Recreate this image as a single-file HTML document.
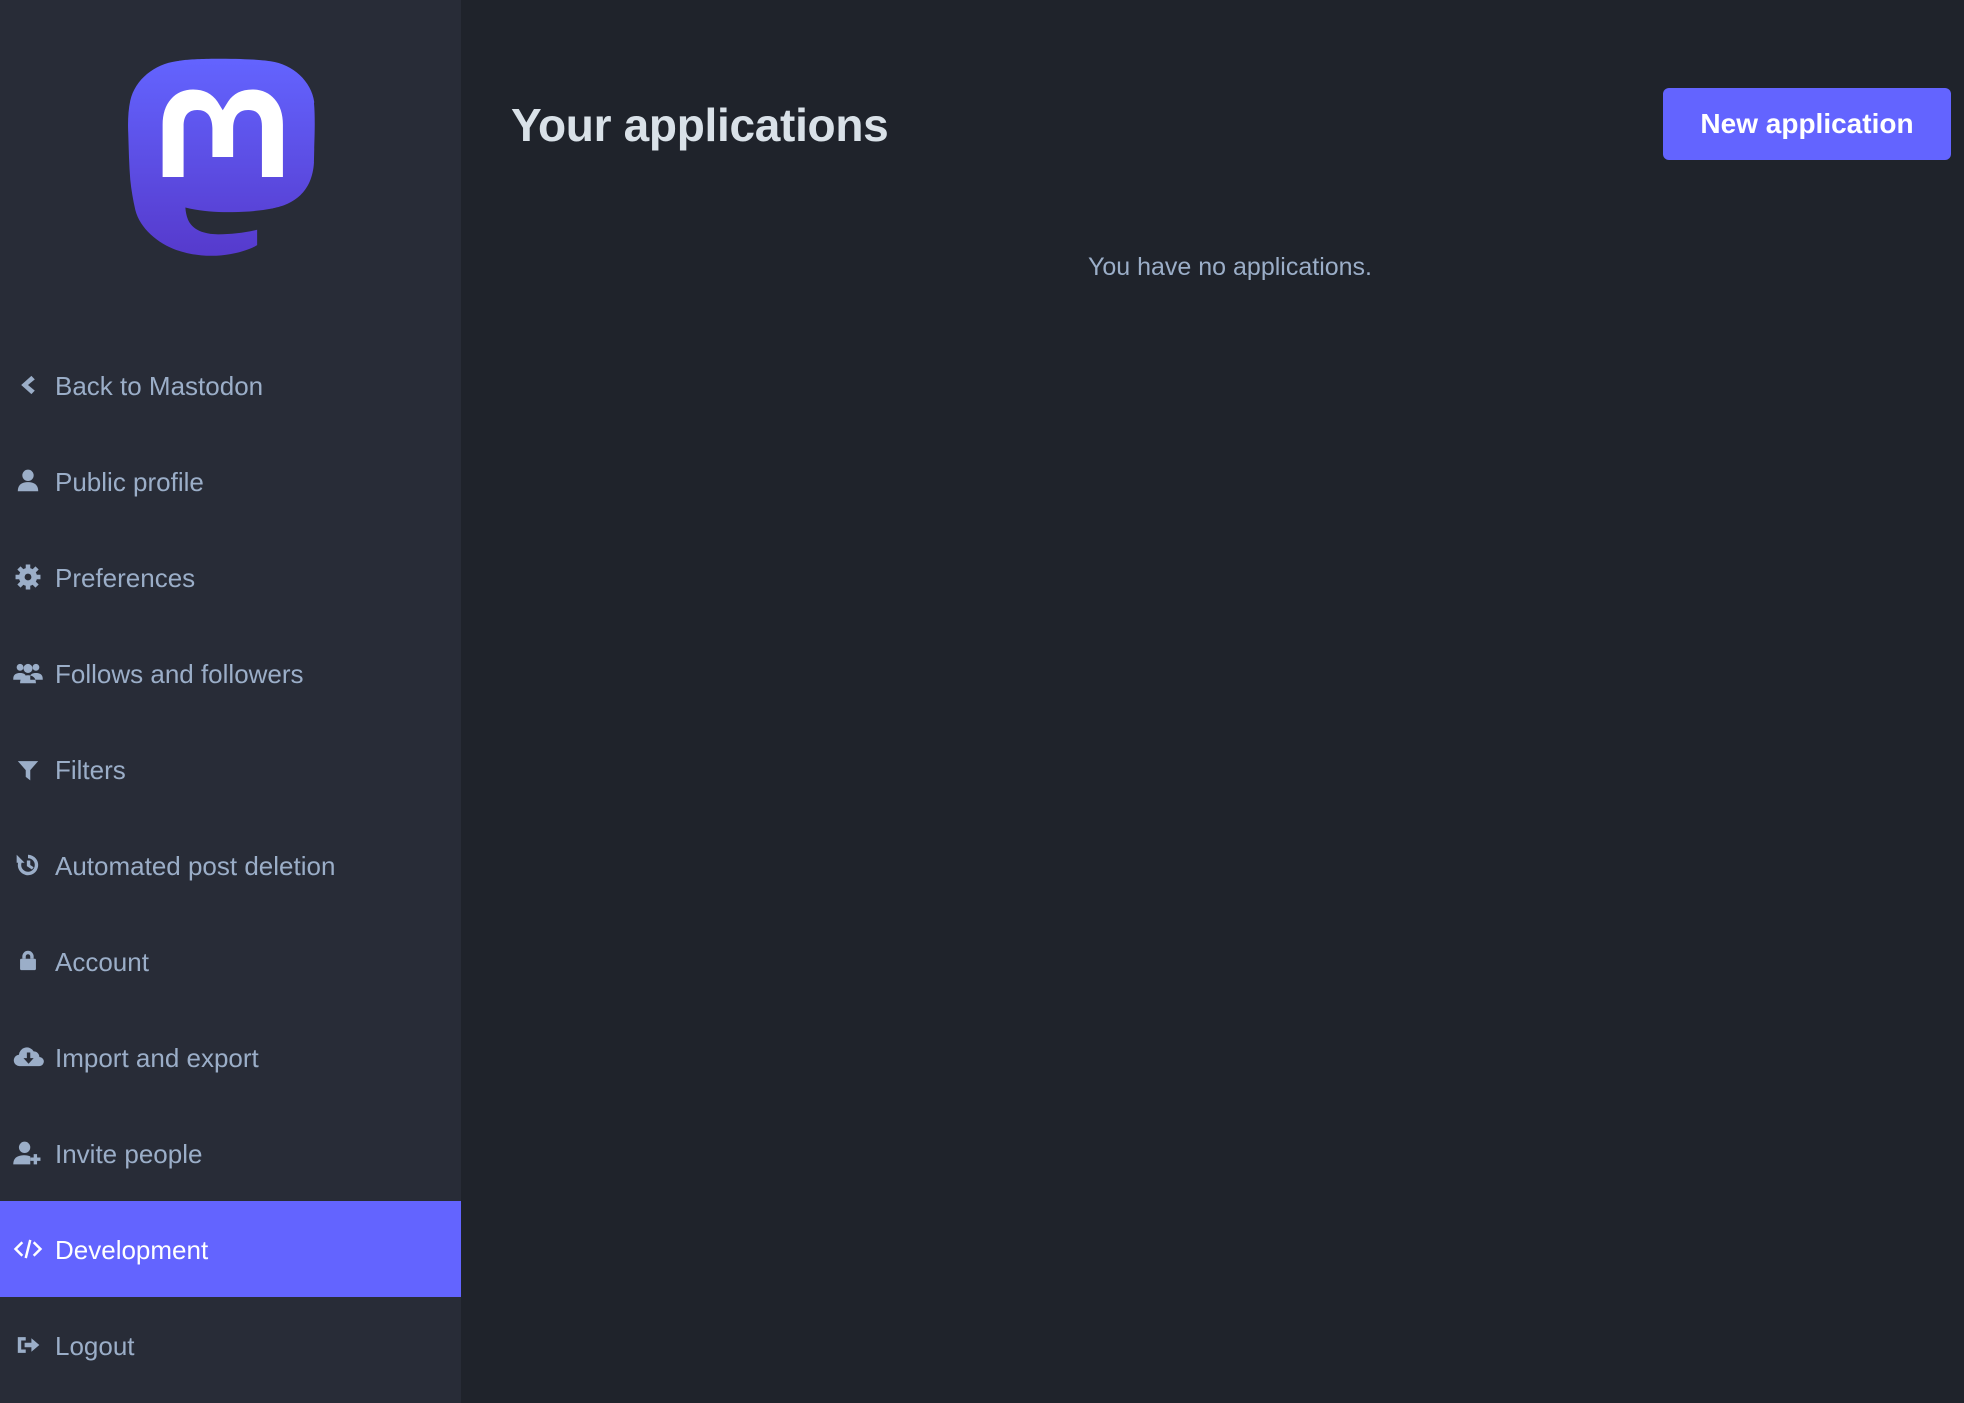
<!DOCTYPE html>
<html><head><meta charset="utf-8"><style>
*{margin:0;padding:0;box-sizing:border-box}
html,body{width:1964px;height:1403px;overflow:hidden;background:#1f232b;font-family:"Liberation Sans",sans-serif}
.side{position:absolute;left:0;top:0;width:461px;height:1403px;background:#282c37}
.logo{position:absolute;left:128px;top:58px;width:187px;height:200px}
.item{position:absolute;left:0;width:461px;height:96px;color:#9baec8;font-size:26px}
.item svg{position:absolute;left:11px;top:50%;transform:translateY(-50%);width:34px;height:34px;fill:#9baec8}
.item span{position:absolute;left:55px;top:34px;line-height:30px}
.item.act{background:#6364ff;color:#fff}
.item.act svg{fill:none;stroke:#fff}
h1{position:absolute;left:511px;top:98px;font-size:46px;font-weight:bold;color:#d9e1e8;letter-spacing:-0.3px}
.btn{position:absolute;left:1663px;top:88px;width:288px;height:72px;background:#6364ff;border-radius:6px;color:#fff;font-size:28px;font-weight:bold;display:flex;align-items:center;justify-content:center}
.empty{position:absolute;left:1030px;top:253px;width:400px;text-align:center;color:#9baec8;font-size:25px;white-space:nowrap}
</style></head><body>
<div class="side">
<svg class="logo" viewBox="0 0 74 79"><defs><linearGradient id="g" x1="0" y1="0" x2="0" y2="1"><stop offset="0" stop-color="#6364ff"/><stop offset="1" stop-color="#563acc"/></linearGradient></defs>
<path fill="url(#g)" d="M73.7 17.4C72.6 9.1 65.2 2.4 56.4 1.2 54.9 1 49.4.2 36.4.2h-.1C23.3.2 20.5 1 19.1 1.2 10.6 2.4 2.8 8.3.9 16.8 0 21 -.1 25.6.1 29.9c.2 6.1.3 12.2.8 18.2.4 4 1.1 8 2 12 1.8 7.3 9.1 13.3 16.2 15.8 7.6 2.6 15.8 3 23.6 1.2.9-.2 1.7-.4 2.6-.7 1.9-.6 4.1-1.3 5.8-2.4V67.9c-5 1.2-10.2 1.8-15.4 1.8-8.9 0-11.3-4.2-12-5.9-.6-1.5-.9-3.1-1-4.7 4.9 1.2 10 1.8 15.1 1.8 1.2 0 2.4 0 3.7 0 5.1-.1 10.5-.4 15.5-1.4.1 0 .3 0 .4-.1 7.9-1.5 15.5-6.2 16.2-18.2 0-.5.1-4.9.1-5.4 0-1.7.5-11.8-.1-18z"/>
<path fill="#fff" d="M61.3 47H53V26.9c0-4.2-1.8-6.4-5.4-6.4-4 0-6 2.6-6 7.6v11H33.4v-11c0-5-2-7.6-6-7.6-3.6 0-5.4 2.2-5.4 6.4V47H13.7V26.3c0-4.2 1.1-7.6 3.3-10.1 2.2-2.5 5.2-3.8 8.8-3.8 4.2 0 7.4 1.6 9.6 4.8l2.1 3.4 2.1-3.4c2.1-3.2 5.3-4.8 9.6-4.8 3.7 0 6.6 1.3 8.8 3.8 2.2 2.5 3.3 5.900 3.3 10.1z"/>
</svg>
<div class="item" style="top:337px"><svg viewBox="0 0 30 30"><path d="M18 7l3 3-6 5 6 5-3 3-9-8z"/></svg><span>Back to Mastodon</span></div>
<div class="item" style="top:433px"><svg viewBox="0 0 30 30"><circle cx="15" cy="10" r="5"/><path d="M6 24c0-6 4-8 9-8s9 2 9 8z"/></svg><span>Public profile</span></div>
<div class="item" style="top:529px"><svg viewBox="0 0 30 30"><circle cx="15" cy="15" r="8"/><g stroke="#9baec8" stroke-width="4"><path d="M15 4v22M4 15h22M7 7l16 16M23 7L7 23"/></g><circle cx="15" cy="15" r="3" fill="#282c37"/></svg><span>Preferences</span></div>
<div class="item" style="top:625px"><svg viewBox="0 0 30 30"><circle cx="8" cy="10" r="3"/><circle cx="22" cy="10" r="3"/><circle cx="15" cy="11" r="4"/><path d="M2 20c0-4 3-5 6-5s5 1 5 3v3H2zM28 20c0-4-3-5-6-5s-5 1-5 3v3h11zM8 24c0-5 3-7 7-7s7 2 7 7z"/></svg><span>Follows and followers</span></div>
<div class="item" style="top:721px"><svg viewBox="0 0 30 30"><path d="M6 8h18l-7 8v9l-4-3v-6z"/></svg><span>Filters</span></div>
<div class="item" style="top:817px"><svg viewBox="0 0 30 30"><path d="M15 6a9 9 0 1 1-8.5 6h3.3A6 6 0 1 0 15 9z" /><path d="M5 6v7h7z"/><path d="M14 11h3v4l3 2-1.5 2-4.5-3z"/></svg><span>Automated post deletion</span></div>
<div class="item" style="top:913px"><svg viewBox="0 0 30 30"><path d="M10 13v-2a5 5 0 0 1 10 0v2h-3v-2a2 2 0 0 0-4 0v2z"/><rect x="8" y="13" width="14" height="10" rx="1"/></svg><span>Account</span></div>
<div class="item" style="top:1009px"><svg viewBox="0 0 30 30"><path d="M8 23a5 5 0 0 1-1-10 7 7 0 0 1 13-3 5 5 0 0 1 5 5 4 4 0 0 1 0 8z"/><path d="M14 11h3v5h3l-4.5 5-4.5-5h3z" fill="#282c37"/></svg><span>Import and export</span></div>
<div class="item" style="top:1105px"><svg viewBox="0 0 30 30"><circle cx="12" cy="10" r="5"/><path d="M2 25c0-6 4-8 10-8 2 0 4 .5 5 1v7z"/><path d="M20 16h3v3h3v3h-3v3h-3v-3h-3v-3h3z"/></svg><span>Invite people</span></div>
<div class="item act" style="top:1201px"><svg viewBox="0 0 30 30" stroke-width="2.2"><path d="M10 9l-6 6 6 6M20 9l6 6-6 6M17 7l-4 16"/></svg><span>Development</span></div>
<div class="item" style="top:1297px"><svg viewBox="0 0 30 30"><path d="M6 8h7v3H9v8h4v3H6z"/><path d="M12 13h6V9l7 6-7 6v-4h-6z"/></svg><span>Logout</span></div>
</div>
<h1>Your applications</h1>
<div class="btn">New application</div>
<div class="empty">You have no applications.</div>
</body></html>
